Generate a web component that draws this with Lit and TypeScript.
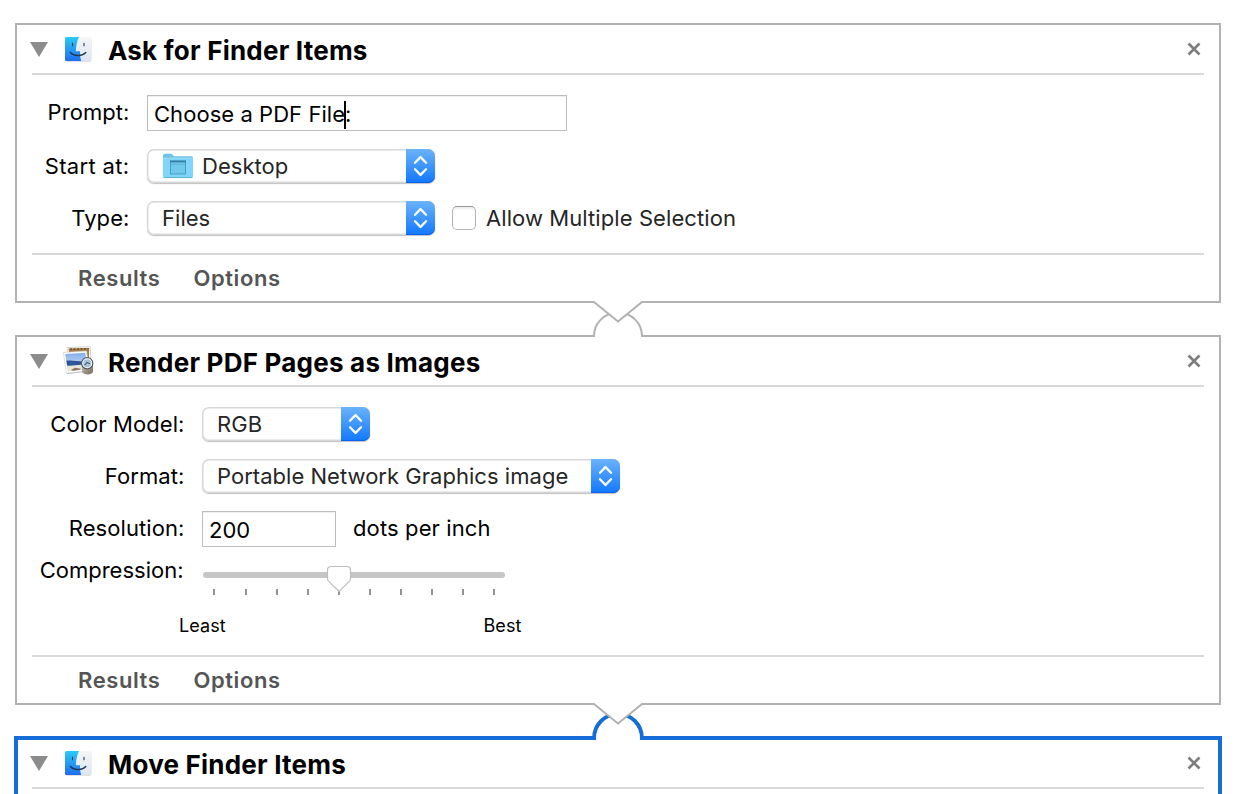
import { LitElement, html, css, svg } from "lit";
import { customElement, property } from "lit/decorators.js";

const finderIcon = html`<svg width="32" height="30" viewBox="0 0 32 30">
  <defs>
    <linearGradient id="fb" x1="0" y1="0" x2="0" y2="1"><stop offset="0" stop-color="#2bcbf8"/><stop offset="1" stop-color="#1f6df0"/></linearGradient>
    <linearGradient id="fw" x1="0" y1="0" x2="0" y2="1"><stop offset="0" stop-color="#f5f6f7"/><stop offset="1" stop-color="#dbe6f3"/></linearGradient>
    <clipPath id="fc"><rect x="3" y="3" width="26.4" height="24" rx="1.6"/></clipPath>
  </defs>
  <rect x="3" y="3.8" width="26.4" height="24" rx="1.8" fill="#bbb" opacity=".6"/>
  <g clip-path="url(#fc)">
    <rect x="3" y="3" width="26.4" height="24" fill="url(#fw)"/>
    <path d="M3 3H17C15 7 14 12 13.800 17.300H18C18 21 18.300 24 19.200 27H3Z" fill="url(#fb)"/>
  </g>
  <path d="M10.500 9.300v2.400M22 9.300v2.400" stroke="#263649" stroke-width="1.100" stroke-linecap="round"/>
  <path d="M8.300 18.500C12.500 22.700 19.500 22.700 23.900 18.500" fill="none" stroke="#20344c" stroke-width="1.200" stroke-linecap="round"/>
</svg>`;

const previewIcon = html`<svg width="34" height="32" viewBox="0 0 34 32">
  <defs>
    <linearGradient id="ps" x1="0" y1="0" x2="0" y2="1"><stop offset="0" stop-color="#86aeea"/><stop offset="1" stop-color="#dcebfb"/></linearGradient>
    <linearGradient id="pl" x1="0" y1="0" x2="1" y2="1"><stop offset="0" stop-color="#c9c2b8"/><stop offset="1" stop-color="#75655a"/></linearGradient>
  </defs>
  <path d="M5 2.500L28.500 1.800L28 25L7 23Z" fill="#fff" stroke="#c9c5bf" stroke-width=".8"/>
  <path d="M6.500 3.600L27.200 3L26.800 18L8 16Z" fill="#a57d45"/>
  <path d="M8 4.200L26.500 3.700" stroke="#5a4422" stroke-width="1.200" stroke-dasharray="2 1.500"/>
  <path d="M2 8.300L24.800 6.500L28.100 26.300L4.800 29.300Z" fill="#777" opacity=".45"/>
  <path d="M1.300 7.500L24.500 6L27.500 25.300L4.300 28.300Z" fill="#fff" stroke="#cfcfcf" stroke-width=".6"/>
  <path d="M3.200 9.100L23.300 7.700L25.800 23.700L5.800 26.500Z" fill="url(#ps)"/>
  <path d="M4.300 15.800C11 15 17 17 24.500 16.500L25.200 21L5.500 22.500Z" fill="#2d5598"/>
  <path d="M5 20.500C11 21.500 17 18.500 25.200 20.500L25.800 23.700L5.800 26.500Z" fill="#e9e6dc"/>
  <path d="M9 25L13 22.800L19 23.700L18 24.700L11 25.700Z" fill="#8d7558"/>
  <path d="M19.800 19H31V27C29.500 30.200 22.500 30.200 20.300 27.500Z" fill="url(#pl)"/>
  <circle cx="25.200" cy="18.300" r="5.600" fill="#a9c3de" stroke="#55575a" stroke-width="1.300"/>
  <circle cx="25.200" cy="18.300" r="4.500" fill="none" stroke="#f0f2f4" stroke-width="1.100"/>
  <path d="M22.500 20.300L25 17.500L28 18.800" fill="none" stroke="#4f5f70" stroke-width="1.100"/>
</svg>`;

const folderIcon = html`<svg width="32" height="26" viewBox="0 0 32 26">
  <path d="M1 23.500V2.500Q1 .8 2.700 .8H9.500L12 3.300H29.500Q31 3.300 31 5V23.500Z" fill="#6cc3e6"/>
  <path d="M1 5.500H31V23Q31 24.800 29.300 24.800H2.700Q1 24.800 1 23Z" fill="#80d6f8"/>
  <path d="M1 5.200H31" stroke="#a1e3fb" stroke-width="1"/>
  <path d="M1.500 24.600H30.500" stroke="#5cb3d6" stroke-width="1"/>
  <rect x="8.500" y="8" width="15" height="13" fill="#72c8ec" stroke="#449fc3"/>
  <path d="M8 8.500H24" stroke="#347fa3" stroke-width="1.800"/>
  <path d="M9 11.300H23" stroke="#56add0" stroke-width=".8"/>
</svg>`;

@customElement("popup-button")
class PopupButton extends LitElement {
  static styles = css`
    :host { display: flex; box-sizing: border-box; height: 34px; border-radius: 7px; background: #fff;
      box-shadow: inset 0 0 0 1.500px #d8d8d8, 0 1px 1px rgba(0,0,0,.25); }
    .value { flex: 1; display: flex; align-items: center; gap: 8px; padding-left: 15px; color: #262626; white-space: nowrap; line-height: 34px; letter-spacing: .03px; }
    .cap { width: 29px; height: 34px; border-radius: 0 7px 7px 0; background: linear-gradient(#6bb3fa, #1278fd);
      box-shadow: inset 0 -1px 0 #0a63f0; display: block; }
    .cap svg { display: block; }
  `;
  render() {
    return html`<div class="value"><slot></slot></div>
      <div class="cap"><svg width="29" height="34" viewBox="0 0 29 34">
        <path d="M9 13.700L14.500 8L20 13.700M9 20.300L14.500 26L20 20.300" fill="none" stroke="#fff" stroke-width="2.300" stroke-linecap="round" stroke-linejoin="round"/>
      </svg></div>`;
  }
}

@customElement("action-link")
class ActionLink extends LitElement {
  @property({ type: Boolean }) selected = false;
  static styles = css`
    :host { display: flex; justify-content: center; height: 36px; margin: -2px 0; position: relative; z-index: 1; }
    :host([selected]) { margin: -2px 0 -4px; height: 37px; }
    svg { display: block; }
  `;
  render() {
    return this.selected
      ? svg`<svg width="60" height="37" viewBox="0 0 60 37">
          <path d="M6 33H54V37H6Z" fill="#fff"/>
          <path d="M2 35H6.200A23.800 24 0 0 1 53.800 35H58" fill="#fff" stroke="#146dd8" stroke-width="4"/>
          <path d="M8.200 37V35A21.800 22 0 0 1 51.800 35V37Z" fill="#fff"/>
          <path d="M6 0H54V1L30 20.500L6 1Z" fill="#fff"/>
          <path d="M4 1H6L30 20.500L54 1H56" fill="none" stroke="#b2b2b2" stroke-width="2"/>
        </svg>`
      : svg`<svg width="60" height="36" viewBox="0 0 60 36">
          <path d="M6 34H54V36H6Z" fill="#fff"/>
          <path d="M4 35H6A24 23.500 0 0 1 54 35H56" fill="#fff" stroke="#b2b2b2" stroke-width="2"/>
          <path d="M6 0H54V1L30 20.500L6 1Z" fill="#fff"/>
          <path d="M4 1H6L30 20.500L54 1H56" fill="none" stroke="#b2b2b2" stroke-width="2"/>
        </svg>`;
  }
}

@customElement("action-panel")
class ActionPanel extends LitElement {
  @property() heading = "";
  @property() icon = "finder";
  @property({ type: Boolean }) open = false;
  static styles = css`
    :host { display: block; box-sizing: border-box; border: 2px solid #b2b2b2; padding: 0 15px; background: #fff; }
    :host([selected]) { border: 4px solid #146dd8; margin: 0 -1px; padding: 0 14px; height: 120px; }
    :host([selected]) .head { margin-top: -1px; }
    .head { display: flex; align-items: center; height: 48px; border-bottom: 2px solid #d9d9d9; }
    .tri { display: block; margin: 0 14px 0 -2px; }
    .icon { width: 34px; height: 32px; display: flex; align-items: center; }
    .title { font-size: 26px; font-weight: 700; margin-left: 12px; padding-top: 3px; letter-spacing: .22px; flex: 1; white-space: nowrap; }
    .close { display: block; margin: 0 3px 1px 0; }
    .foot { display: flex; align-items: center; height: 46px; border-top: 2px solid #d9d9d9; padding-left: 46px; gap: 33px;
      font-weight: 600; color: #555; letter-spacing: .58px; }
  `;
  render() {
    return html`<div class="head">
        <svg class="tri" width="18" height="15" viewBox="0 0 18 15"><path d="M0 0H18L9 15Z" fill="#8c8c8c"/></svg>
        <div class="icon">${this.icon === "finder" ? finderIcon : previewIcon}</div>
        <div class="title">${this.heading}</div>
        <svg class="close" width="14" height="14" viewBox="0 0 14 14"><path d="M1.500 1.500L12.500 12.500M12.500 1.500L1.500 12.500" stroke="#7d7d7d" stroke-width="2.600"/></svg>
      </div>
      <slot></slot>
      ${this.open ? html`<div class="foot"><span>Results</span><span>Options</span></div>` : null}`;
  }
}

@customElement("app-root")
class AppRoot extends LitElement {
  static styles = css`
    :host { display: block; box-sizing: border-box; width: 1236px; height: 794px; overflow: hidden; padding: 23px 15px 0; background: #fff;
      font: 22px/30px Inter, "Liberation Sans", sans-serif; color: #000; }
    .form { display: grid; box-sizing: border-box; column-gap: 18px; white-space: nowrap; }
    .finder { height: 178px; grid-template-columns: 97px 1fr; grid-template-rows: 36px 34px 34px; row-gap: 18px; padding-top: 20px; }
    .render { height: 268px; grid-template-columns: 152px 1fr; grid-template-rows: 34px 34px 36px 27px auto; row-gap: 18px; padding-top: 20px; }
    .label { text-align: right; line-height: 34px; margin-right: -.5px; letter-spacing: .08px; }
    .start { letter-spacing: .35px; }
    .row { display: flex; align-items: center; }
    .field { box-sizing: border-box; height: 36px; border: 1.500px solid #bdbdbd; box-shadow: inset 0 1px 0 #eee; line-height: 33px; padding: 2px 0 0 6px; }
    .prompt { width: 420px; letter-spacing: .05px; }
    .caret { display: inline-block; width: 2px; height: 28px; margin: 0 -1px; background: #000; vertical-align: -7px; }
    .resolution { width: 134px; }
    .w288 { width: 288px; } .w168 { width: 168px; } .w418 { width: 418px; }
    .box { box-sizing: border-box; width: 24px; height: 24px; margin: 0 10px 0 17px; border: 1.500px solid #b5b5b5; border-top-color: #999; border-radius: 5px;
      box-shadow: inset 0 2px 2px #eee; }
    .check { color: #262626; letter-spacing: .08px; }
    .unit { margin: -2px 0 0 17px; letter-spacing: .12px; }
    .compression { margin-top: -10px; line-height: 30px; padding-right: 1px; letter-spacing: 0; }
    .slider { margin-top: -9px; }
    .slider svg { display: block; }
    .ends { grid-column: 2; display: flex; justify-content: space-between; width: 342.500px; margin-left: -23px; font-size: 18px; line-height: 24px; padding-top: 4px; letter-spacing: .1px; }
  `;
  render() {
    const ticks = [12, 44, 75, 106, 137, 168, 199, 230, 261, 292];
    return html`
      <action-panel heading="Ask for Finder Items" open>
        <div class="form finder">
          <div class="label">Prompt:</div>
          <div class="field prompt">Choose a PDF File<span class="caret"></span>:</div>
          <div class="label start">Start at:</div>
          <popup-button class="w288">${folderIcon}<span>Desktop</span></popup-button>
          <div class="label">Type:</div>
          <div class="row"><popup-button class="w288">Files</popup-button><span class="box"></span><span class="check">Allow Multiple Selection</span></div>
        </div>
      </action-panel>
      <action-link></action-link>
      <action-panel heading="Render PDF Pages as Images" icon="preview" open>
        <div class="form render">
          <div class="label">Color Model:</div>
          <popup-button class="w168">RGB</popup-button>
          <div class="label">Format:</div>
          <popup-button class="w418">Portable Network Graphics image</popup-button>
          <div class="label">Resolution:</div>
          <div class="row"><div class="field resolution">200</div><span class="unit">dots per inch</span></div>
          <div class="label compression">Compression:</div>
          <div class="slider"><svg width="304" height="40" viewBox="0 0 304 40">
            <rect x="1" y="16" width="302" height="6" rx="3" fill="#c6c6c6"/>
            ${ticks.map((x) => svg`<path d="M${x} 33V39" stroke="#919191" stroke-width="2"/>`)}
            <path d="M129 10.500H145Q148.500 10.500 148.500 14V22.500Q148.500 24 147.500 25.200L137 35.500L126.500 25.200Q125.500 24 125.500 22.500V14Q125.500 10.500 129 10.500Z" fill="#fff" stroke="#bfbfbf" stroke-width="1.200"/>
          </svg></div>
          <div class="ends"><span>Least</span><span>Best</span></div>
        </div>
      </action-panel>
      <action-link selected></action-link>
      <action-panel heading="Move Finder Items" selected></action-panel>`;
  }
}
